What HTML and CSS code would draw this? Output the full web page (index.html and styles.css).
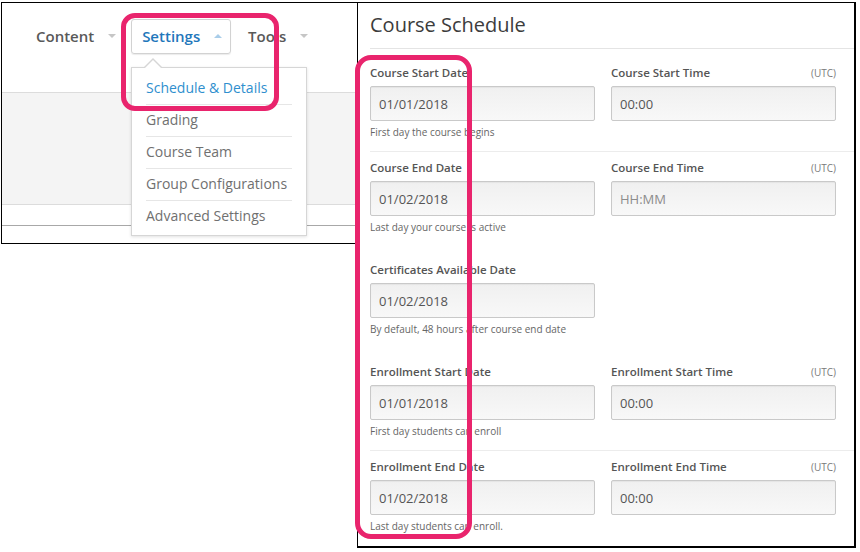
FILE: index.html
```html
<!DOCTYPE html>
<html lang="en">
<head>
    <meta charset="UTF-8">
    <meta name="viewport" content="width=device-width, initial-scale=1.0">
    <title>Schedule &amp; Details</title>
    <link rel="stylesheet" href="styles.css">
</head>
<body>
    <div class="canvas">
        <div class="shot shot-nav">
            <nav class="nav">
                <div class="nav-item">Content <span class="caret"></span></div>
                <div class="nav-item is-open">Settings <span class="caret up"></span></div>
                <div class="nav-item">Tools <span class="caret"></span></div>
            </nav>
            <div class="band"></div>
            <div class="strip"></div>
            <ul class="dropdown">
                <li class="current">Schedule &amp; Details</li>
                <li>Grading</li>
                <li>Course Team</li>
                <li>Group Configurations</li>
                <li>Advanced Settings</li>
            </ul>
        </div>

        <div class="shot shot-form">
            <h2>Course Schedule</h2>

            <div class="row">
                <div class="field">
                    <div class="label-line"><label>Course Start Date</label></div>
                    <input type="text" value="01/01/2018" readonly>
                    <p class="help">First day the course begins</p>
                </div>
                <div class="field">
                    <div class="label-line"><label>Course Start Time</label><span class="tz">(UTC)</span></div>
                    <input type="text" value="00:00" readonly>
                </div>
            </div>

            <div class="row row-sep">
                <div class="field">
                    <div class="label-line"><label>Course End Date</label></div>
                    <input type="text" value="01/02/2018" readonly>
                    <p class="help">Last day your course is active</p>
                </div>
                <div class="field">
                    <div class="label-line"><label>Course End Time</label><span class="tz">(UTC)</span></div>
                    <input type="text" placeholder="HH:MM" readonly>
                </div>
            </div>

            <div class="row row-gap">
                <div class="field">
                    <div class="label-line"><label>Certificates Available Date</label></div>
                    <input type="text" value="01/02/2018" readonly>
                    <p class="help">By default, 48 hours after course end date</p>
                </div>
            </div>

            <div class="row row-gap">
                <div class="field">
                    <div class="label-line"><label>Enrollment Start Date</label></div>
                    <input type="text" value="01/01/2018" readonly>
                    <p class="help">First day students can enroll</p>
                </div>
                <div class="field">
                    <div class="label-line"><label>Enrollment Start Time</label><span class="tz">(UTC)</span></div>
                    <input type="text" value="00:00" readonly>
                </div>
            </div>

            <div class="row row-sep">
                <div class="field">
                    <div class="label-line"><label>Enrollment End Date</label></div>
                    <input type="text" value="01/02/2018" readonly>
                    <p class="help">Last day students can enroll.</p>
                </div>
                <div class="field">
                    <div class="label-line"><label>Enrollment End Time</label><span class="tz">(UTC)</span></div>
                    <input type="text" value="00:00" readonly>
                </div>
            </div>
        </div>

        <div class="callout callout-menu"></div>
        <div class="callout callout-dates"></div>
    </div>
</body>
</html>
```

FILE: styles.css
```css
body {
    margin: 0;
    background: #fff;
    font-family: "Open Sans", "DejaVu Sans", sans-serif;
    color: #444;
}

.canvas {
    position: relative;
    width: 860px;
    height: 552px;
    overflow: hidden;
}

.shot {
    position: absolute;
    box-sizing: border-box;
    background: #fff;
    border: 1px solid #000;
    overflow: hidden;
}

/* left screenshot: navigation */

.shot-nav {
    left: 1px;
    top: 2px;
    width: 357px;
    height: 242px;
}

.nav {
    display: flex;
    gap: 6px;
    height: 89px;
    box-sizing: border-box;
    padding: 16px 0 0 23px;
}

.nav-item {
    display: flex;
    align-items: center;
    height: 35px;
    box-sizing: border-box;
    padding: 0 8px 2px 10px;
    border: 1px solid transparent;
    border-radius: 3px;
    font-size: 15px;
    font-weight: 600;
    color: #595959;
    white-space: pre;
}

.nav-item.is-open {
    border-color: #d2d2d2;
    color: #1f77bb;
    box-shadow: 0 1px 1px rgba(0, 0, 0, 0.08);
}

.caret {
    width: 0;
    height: 0;
    margin-left: 10px;
    border-left: 4px solid transparent;
    border-right: 4px solid transparent;
    border-top: 4px solid #c6c6c6;
}

.caret.up {
    border-top: none;
    border-bottom: 4px solid #a9cde9;
}

.band {
    height: 111px;
    background: #f4f4f4;
    border-top: 1px solid #dcdcdc;
    border-bottom: 1px solid #dcdcdc;
}

.strip {
    height: 20px;
    border-bottom: 1px solid #a8a8a8;
}

.dropdown {
    position: absolute;
    left: 129px;
    top: 64px;
    width: 176px;
    box-sizing: border-box;
    margin: 0;
    padding: 5px 0 3px;
    list-style: none;
    background: #fff;
    border: 1px solid #d6d6d6;
    box-shadow: 0 1px 3px rgba(0, 0, 0, 0.12);
}

.dropdown::before,
.dropdown::after {
    content: "";
    position: absolute;
    width: 0;
    height: 0;
}

.dropdown::before {
    top: -10px;
    left: 11px;
    border-left: 10px solid transparent;
    border-right: 10px solid transparent;
    border-bottom: 10px solid #d6d6d6;
}

.dropdown::after {
    top: -8px;
    left: 12px;
    border-left: 9px solid transparent;
    border-right: 9px solid transparent;
    border-bottom: 9px solid #fff;
}

.dropdown li {
    margin: 0 14px;
    padding-bottom: 1px;
    line-height: 30px;
    font-size: 14px;
    color: #707070;
}

.dropdown li + li {
    border-top: 1px solid #e6e6e6;
}

.dropdown li.current {
    color: #2f8fce;
}

/* right screenshot: schedule form */

.shot-form {
    left: 357px;
    top: 2px;
    width: 499px;
    height: 546px;
    border-width: 1px 2px 2px 1px;
    padding: 8px 0 0 12px;
}

.shot-form h2 {
    margin: 0 0 8px;
    padding-bottom: 9px;
    font-size: 20px;
    font-weight: 400;
    line-height: 28px;
    color: #3c3c3c;
    border-bottom: 1px solid #e4e4e4;
}

.row {
    display: grid;
    grid-template-columns: 225px 225px;
    column-gap: 16px;
    padding: 8px 0 12px;
}

.row-sep {
    border-top: 1px solid #ececec;
}

.row-gap {
    margin-top: 8px;
}

.label-line {
    display: flex;
    justify-content: space-between;
    align-items: baseline;
    height: 16px;
    line-height: 16px;
}

.label-line label {
    font-size: 11.5px;
    font-weight: 600;
    color: #555;
}

.tz {
    font-size: 10px;
    color: #7a7a7a;
}

.field input {
    display: block;
    width: 100%;
    height: 35px;
    box-sizing: border-box;
    margin-top: 5px;
    padding: 0 8px;
    border: 1px solid #c9c9c9;
    border-radius: 2px;
    background: linear-gradient(#f0f0f0, #f8f8f8);
    box-shadow: inset 0 1px 1px rgba(0, 0, 0, 0.05);
    font-family: "Open Sans", "DejaVu Sans", sans-serif;
    font-size: 13px;
    color: #555;
    outline: none;
}

.field input::placeholder {
    color: #8c8c8c;
}

.help {
    margin: 4px 0 0;
    font-size: 10px;
    line-height: 14px;
    color: #666;
}

/* pink annotations drawn over the screenshots */

.callout {
    position: absolute;
    box-sizing: border-box;
    border: 5px solid #e9246d;
    z-index: 5;
}

.callout-menu {
    left: 121px;
    top: 13px;
    width: 158px;
    height: 98px;
    border-radius: 14px;
}

.callout-dates {
    left: 355px;
    top: 55px;
    width: 117px;
    height: 484px;
    border-radius: 16px;
}
```
